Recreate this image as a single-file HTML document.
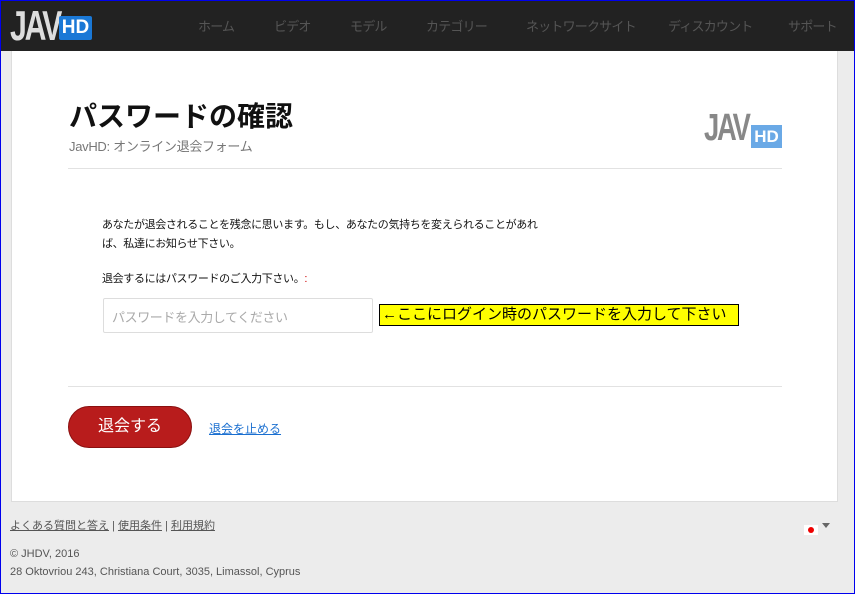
<!DOCTYPE html>
<html><head><meta charset="utf-8"><style>
*{margin:0;padding:0;box-sizing:border-box}
html,body{width:855px;height:594px;overflow:hidden}
body{background:#ececec;font-family:"Liberation Sans","Noto Sans CJK JP",sans-serif;position:relative;border:1px solid #0000ee}
.hdr{position:absolute;left:0;top:0;width:853px;height:50px;background:#222}
.logo{position:absolute;left:9px;top:4px;font:bold 42px/42px "Liberation Sans",sans-serif;color:#ddd;letter-spacing:-3px;transform:scaleX(.72);transform-origin:left}
.hd{position:absolute;left:58px;top:15px;width:33px;height:24px;background:#1a78d6;color:#fff;font:bold 19px/24px "Liberation Sans",sans-serif;text-align:center;border-radius:2px}
.nav span{position:absolute;top:15px;font-size:13px;color:#555;letter-spacing:-0.8px}
.card{position:absolute;left:10px;top:50px;width:827px;height:451px;background:#fff;border:1px solid #ddd;border-top:none}
h1{position:absolute;left:57px;top:44px;font-size:28px;font-weight:bold;color:#111}
.sub{position:absolute;left:57px;top:85px;font-size:13px;color:#777;letter-spacing:-0.3px}
.hr{position:absolute;left:56px;width:714px;height:1px;background:#e2e2e2}
.rlogo{position:absolute;left:692px;top:58px;font:bold 38px/38px "Liberation Sans",sans-serif;color:#888;letter-spacing:-3px;transform:scaleX(.72);transform-origin:left}
.rhd{position:absolute;left:739px;top:74px;width:31px;height:23px;background:#6aa9e6;color:#fff;font:bold 17px/23px "Liberation Sans",sans-serif;text-align:center}
.txt{position:absolute;left:90px;font-size:11px;color:#111;line-height:19px;letter-spacing:-0.35px}
.inp{position:absolute;left:91px;top:247px;width:270px;height:35px;border:1px solid #ddd;border-radius:2px;font-size:13px;color:#aaa;padding:8px 8px;letter-spacing:-0.4px}
.note{position:absolute;left:367px;top:253px;width:360px;height:22px;background:#ff0;border:1px solid #000;font-size:15px;line-height:20px;padding:0 2px;color:#000;white-space:nowrap}
.btn{position:absolute;left:56px;top:355px;width:124px;height:42px;background:#b81c1c;border-radius:21px;color:#fff;font-size:16px;line-height:40px;text-align:center;border:1px solid #8a1010}
.cancel{position:absolute;left:197px;top:369px;font-size:12px;color:#1a6fd0;text-decoration:underline}
.ft{position:absolute;left:9px;font-size:11px;color:#555}
.ft a{color:#555;text-decoration:underline}
</style></head><body>
<div class="hdr">
<div class="logo">JAV</div><div class="hd">HD</div>
<div class="nav"><span style="left:197px">ホーム</span><span style="left:273px">ビデオ</span><span style="left:349px">モデル</span><span style="left:425px">カテゴリー</span><span style="left:525px">ネットワークサイト</span><span style="left:667px">ディスカウント</span><span style="left:787px">サポート</span></div>
</div>
<div class="card">
<h1>パスワードの確認</h1>
<div class="sub">JavHD: オンライン退会フォーム</div>
<div class="rlogo">JAV</div><div class="rhd">HD</div>
<div class="hr" style="top:117px"></div>
<div class="txt" style="top:165px">あなたが退会されることを残念に思います。もし、あなたの気持ちを変えられることがあれ<br>ば、私達にお知らせ下さい。</div>
<div class="txt" style="top:219px">退会するにはパスワードのご入力下さい。<span style="color:#c00">:</span></div>
<div class="inp">パスワードを入力してください</div>
<div class="note">←ここにログイン時のパスワードを入力して下さい</div>
<div class="hr" style="top:335px"></div>
<div class="btn">退会する</div>
<div class="cancel">退会を止める</div>
</div>
<div class="ft" style="top:516px"><a>よくある質問と答え</a> | <a>使用条件</a> | <a>利用規約</a></div>
<div style="position:absolute;left:803px;top:524px;width:14px;height:10px;background:#fff"><div style="margin:2px 4px;width:6px;height:6px;border-radius:50%;background:#e00"></div></div>
<div style="position:absolute;left:821px;top:522px;border:4px solid transparent;border-top:5px solid #666"></div>
<div class="ft" style="top:547px">© JHDV, 2016</div>
<div class="ft" style="top:565px">28 Oktovriou 243, Christiana Court, 3035, Limassol, Cyprus</div>
</body></html>
